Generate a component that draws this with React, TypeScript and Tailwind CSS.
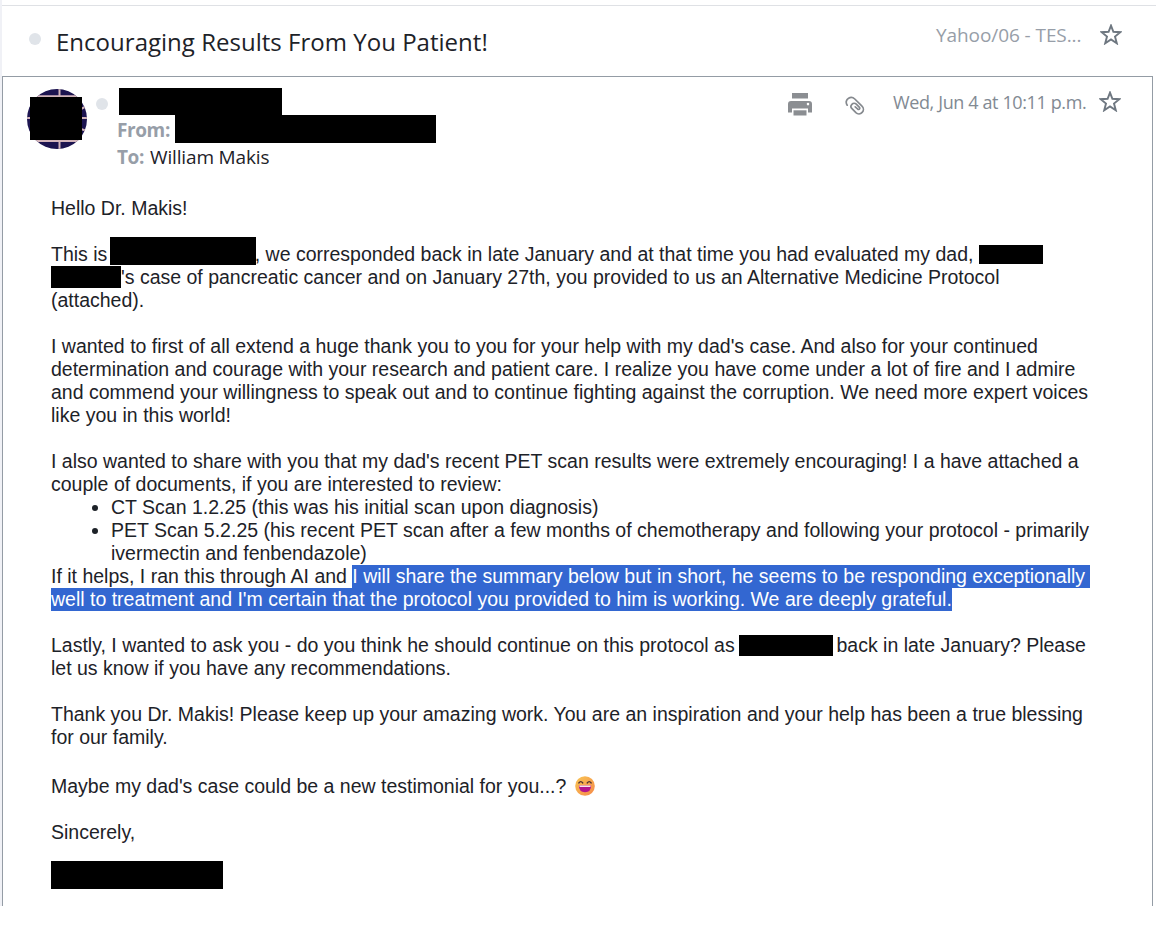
import type { ReactNode } from "react";
import clsx from "clsx";

function Redacted({ className }: { className: string }) {
  return <span className={clsx("shrink-0 bg-black", className)} />;
}

function StarIcon() {
  return (
    <svg width="22" height="21" viewBox="0 0 22 21" fill="none" className="shrink-0">
      <path
        d="M11 1.6 13.4 7.8 20.3 8.2 15 12.5 16.8 19.3 11 15.5 5.2 19.3 7 12.5 1.7 8.2 8.6 7.8Z"
        stroke="#6e7780"
        strokeWidth="1.9"
      />
    </svg>
  );
}

function PrintIcon() {
  return (
    <svg width="24" height="23" viewBox="0 0 24 23" fill="#8b8e92" className="shrink-0">
      <path d="M4 0H20V5.5H4Z" />
      <path
        fillRule="evenodd"
        d="M3 8H21Q24 8 24 11V19.5H20V15.5H4V19.5H0V11Q0 8 3 8ZM20 9.8A1.3 1.3 0 1 0 20 12.4 1.3 1.3 0 1 0 20 9.8Z"
      />
      <path d="M5.5 17.3H18.5V22.5H5.5Z" />
    </svg>
  );
}

function ClipIcon() {
  return (
    <svg
      width="20"
      height="20"
      viewBox="0 0 20 20"
      fill="none"
      stroke="#85898e"
      strokeWidth="1.7"
      strokeLinecap="round"
      className="shrink-0"
    >
      <path d="M2.2 9.2C0.4 6.6 1.2 3.6 3.6 2.2 5.6 1 8 1.3 9.8 3L17 10.2A4.4 4.4 0 0 1 10.9 16.6L7 12.7A3.1 3.1 0 0 1 11.3 8.2L14.2 11.2C15.4 12.5 14.2 14.2 12.8 13.2L10.2 10.8" />
    </svg>
  );
}

function Avatar() {
  return (
    <svg width="60" height="60" viewBox="0 0 60 60" className="shrink-0">
      <clipPath id="avatar-clip">
        <circle cx="30" cy="30" r="30" />
      </clipPath>
      <g clipPath="url(#avatar-clip)">
        <path d="M0 0H60V60H0Z" fill="#1c1450" />
        <path d="M32.5 0V60M0 29H60M8 7.2H54M8 52H54M54 20 60 17M54 40 60 42" stroke="#d3b5bb" strokeWidth="2" />
      </g>
      <path d="M3 8H55V51H3Z" />
    </svg>
  );
}

function LaughEmoji() {
  return (
    <svg width="20" height="20" viewBox="0 0 20 20" className="-mt-px ml-[9px] shrink-0">
      <defs>
        <linearGradient id="face" x1="0" y1="0" x2="1" y2="1">
          <stop offset="0" stopColor="#f9c653" />
          <stop offset="1" stopColor="#f5894a" />
        </linearGradient>
      </defs>
      <circle cx="10" cy="10" r="9.8" fill="url(#face)" />
      <path d="M3.8 7Q5.8 4.2 7.8 7M12.2 7Q14.2 4.2 16.2 7" fill="none" stroke="#4d3032" strokeWidth="1.3" strokeLinecap="round" />
      <path d="M3.8 9.6H16.2Q16 16.3 10 16.3T3.8 9.6Z" fill="#b3158c" />
      <path d="M4.3 9.6H15.7L15.4 11H4.6Z" fill="#f6e3ee" />
    </svg>
  );
}

function Line({ className, children }: { className?: string; children?: ReactNode }) {
  return <div className={clsx("flex h-[23px] items-center whitespace-pre", className)}>{children}</div>;
}

function MessageBody() {
  return (
    <div className="mt-[26px] ml-[48px] font-['Liberation_Sans',Arial,sans-serif] text-[19.5px] leading-[23px] text-[#1d2228]">
      <Line>Hello Dr. Makis!</Line>
      <Line />
      <Line>
        This is <Redacted className="-mt-[7px] -mr-px -ml-[3px] h-[28px] w-[146px]" />, we corresponded back in late January and at that time you had evaluated my dad,{" "}
        <Redacted className="-mt-px h-[19px] w-[64px]" />
      </Line>
      <Line>
        <Redacted className="-mt-px h-[22px] w-[70px]" />'s case of pancreatic cancer and on January 27th, you provided to us an Alternative Medicine Protocol
      </Line>
      <Line>(attached).</Line>
      <Line />
      <Line>I wanted to first of all extend a huge thank you to you for your help with my dad's case. And also for your continued</Line>
      <Line>determination and courage with your research and patient care. I realize you have come under a lot of fire and I admire</Line>
      <Line>and commend your willingness to speak out and to continue fighting against the corruption. We need more expert voices</Line>
      <Line>like you in this world!</Line>
      <Line />
      <Line>I also wanted to share with you that my dad's recent PET scan results were extremely encouraging! I a have attached a</Line>
      <Line>couple of documents, if you are interested to review:</Line>
      <ul className="ml-[60px] list-disc">
        <li className="whitespace-pre">CT Scan 1.2.25 (this was his initial scan upon diagnosis)</li>
        <li className="whitespace-pre">
          PET Scan 5.2.25 (his recent PET scan after a few months of chemotherapy and following your protocol - primarily
          <br />
          ivermectin and fenbendazole)
        </li>
      </ul>
      <Line>
        If it helps, I ran this through AI and{" "}
        <span className="bg-[#3367d1] text-white">I will share the summary below but in short, he seems to be responding exceptionally </span>
      </Line>
      <Line>
        <span className="bg-[#3367d1] text-white">well to treatment and I'm certain that the protocol you provided to him is working. We are deeply grateful.</span>
      </Line>
      <Line />
      <Line>
        Lastly, I wanted to ask you - do you think he should continue on this protocol as <Redacted className="-ml-px h-[21px] w-[94px]" />
        <span className="-ml-[2px]"> back in late January? Please</span>
      </Line>
      <Line>let us know if you have any recommendations.</Line>
      <Line />
      <Line>Thank you Dr. Makis! Please keep up your amazing work. You are an inspiration and your help has been a true blessing</Line>
      <Line>for our family.</Line>
      <Line />
      <Line className="mt-[3px]">
        Maybe my dad's case could be a new testimonial for you...?
        <LaughEmoji />
      </Line>
      <Line />
      <Line>Sincerely,</Line>
      <Redacted className="mt-[17px] block h-[28px] w-[172px]" />
    </div>
  );
}

function MessageHeader() {
  return (
    <header className="flex h-[94px] pt-[12px] pl-[24px]">
      <Avatar />
      <span className="mt-[9px] ml-[9px] size-3 rounded-full bg-[#e0e4e9]" />
      <div className="-mt-px ml-[9px] flex w-[400px] flex-col text-[19px] leading-[27px] font-bold text-[#979ea8]">
        <Redacted className="ml-[2px] h-[27px] w-[163px]" />
        <div className="flex h-[28px] whitespace-pre">
          <span className="mt-[2px] w-[58px] tracking-[-0.4px]">From:</span>
          <Redacted className="h-[28px] w-[261px]" />
        </div>
        <div className="flex pt-px whitespace-pre">
          <span className="w-[33px] tracking-[-0.4px]">To:</span>
          <span className="font-normal tracking-[-0.15px] text-[#1d2228]">William Makis</span>
        </div>
      </div>
      <div className="ml-auto flex pr-[31px]">
        <span className="mt-[4px]">
          <PrintIcon />
        </span>
        <span className="mt-[7px] ml-[33px]">
          <ClipIcon />
        </span>
        <span className="ml-[28px] w-[206px] text-[18px] leading-[27px] tracking-[-0.38px] whitespace-nowrap text-[#828a93]">
          Wed, Jun 4 at 10:11 p.m.
        </span>
        <span className="mt-[2px]">
          <StarIcon />
        </span>
      </div>
    </header>
  );
}

export default function App() {
  return (
    <div className="h-[940px] w-[1156px] overflow-hidden bg-white font-['Open_Sans','Noto_Sans',sans-serif]">
      <div className="flex h-[76px] border-l-2 border-[#f0f1f6] pt-[5px]">
        <div className="flex w-full border-t border-[#dfe1e5]">
          <span className="mt-[27px] ml-[27px] size-3 shrink-0 rounded-full bg-[#e0e4e9]" />
          <h1 className="mt-[20px] ml-[15px] text-[24px] leading-[32px] tracking-[0.02px] whitespace-nowrap text-[#1d2228]">
            Encouraging Results From You Patient!
          </h1>
          <span className="mt-[16px] ml-auto w-[164px] text-[19px] leading-[27px] tracking-[-0.08px] whitespace-nowrap text-[#979ea8]">
            Yahoo/06 - TES...
          </span>
          <span className="mt-[18px] mr-[34px]">
            <StarIcon />
          </span>
        </div>
      </div>
      <div className="flex h-[830px] border-l-2 border-[#f0f1f6]">
        <article className="w-[1151px] border border-b-0 border-[#949ca5]">
          <MessageHeader />
          <MessageBody />
        </article>
      </div>
    </div>
  );
}
